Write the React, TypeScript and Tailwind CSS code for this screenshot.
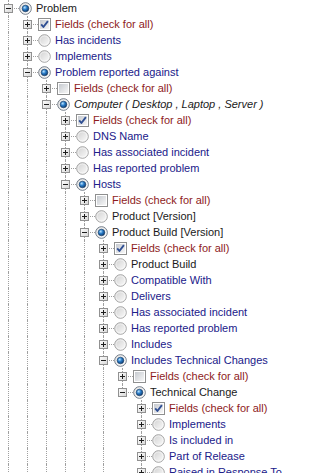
import React from 'react';

type Kind = 'radio' | 'radioOn' | 'check' | 'checkOn';
type Tone = 'entity' | 'rel' | 'fields';

interface Node {
  level: number;
  label: string;
  kind: Kind;
  tone: Tone;
  open?: boolean;
  last?: boolean;
  italic?: boolean;
}

const F = (level: number, checked = false): Node => ({
  level,
  label: 'Fields (check for all)',
  kind: checked ? 'checkOn' : 'check',
  tone: 'fields',
});

const R = (level: number, label: string): Node => ({ level, label, kind: 'radio', tone: 'rel' });

const ROWS: Node[] = [
  { level: 0, label: 'Problem', kind: 'radioOn', tone: 'entity', open: true },
  F(1, true),
  R(1, 'Has incidents'),
  R(1, 'Implements'),
  { level: 1, label: 'Problem reported against', kind: 'radioOn', tone: 'rel', open: true },
  F(2),
  { level: 2, label: 'Computer ( Desktop , Laptop , Server )', kind: 'radioOn', tone: 'entity', open: true, italic: true },
  F(3, true),
  R(3, 'DNS Name'),
  R(3, 'Has associated incident'),
  R(3, 'Has reported problem'),
  { level: 3, label: 'Hosts', kind: 'radioOn', tone: 'rel', open: true },
  F(4),
  { level: 4, label: 'Product [Version]', kind: 'radio', tone: 'entity' },
  { level: 4, label: 'Product Build [Version]', kind: 'radioOn', tone: 'entity', open: true },
  F(5, true),
  { level: 5, label: 'Product Build', kind: 'radio', tone: 'entity' },
  R(5, 'Compatible With'),
  R(5, 'Delivers'),
  R(5, 'Has associated incident'),
  R(5, 'Has reported problem'),
  R(5, 'Includes'),
  { level: 5, label: 'Includes Technical Changes', kind: 'radioOn', tone: 'rel', open: true },
  F(6),
  { level: 6, label: 'Technical Change', kind: 'radioOn', tone: 'entity', open: true, last: true },
  F(7, true),
  R(7, 'Implements'),
  R(7, 'Is included in'),
  R(7, 'Part of Release'),
  R(7, 'Raised in Response To'),
];

const TONE: Record<Tone, string> = {
  entity: 'text-[#1a1a1a]',
  rel: 'text-[#20208a]',
  fields: 'text-[#8e1c1c]',
};

function Defs() {
  return (
    <svg width="0" height="0" className="absolute">
      <defs>
        <linearGradient id="exp" x1="0" y1="0" x2="1" y2="1">
          <stop offset="0" stopColor="#ffffff" />
          <stop offset="1" stopColor="#d6d6d6" />
        </linearGradient>
        <linearGradient id="rad" x1="0" y1="0" x2="1" y2="1">
          <stop offset="0" stopColor="#cfcfcf" />
          <stop offset="1" stopColor="#fdfdfd" />
        </linearGradient>
        <radialGradient id="dot" cx="0.38" cy="0.35" r="0.7">
          <stop offset="0" stopColor="#b9e4ff" />
          <stop offset="0.45" stopColor="#2a7cc8" />
          <stop offset="1" stopColor="#0b3566" />
        </radialGradient>
        <linearGradient id="box" x1="0" y1="0" x2="1" y2="1">
          <stop offset="0" stopColor="#c6cad0" />
          <stop offset="1" stopColor="#f7f7f7" />
        </linearGradient>
      </defs>
    </svg>
  );
}

function Expander({ open }: { open?: boolean }) {
  return (
    <svg width="9" height="9" viewBox="0 0 9 9" shapeRendering="crispEdges" className="col-start-1 row-start-1 ml-[4px] mt-[4px] block self-start">
      <rect x="0.5" y="0.5" width="8" height="8" fill="url(#exp)" stroke="#919191" />
      <rect x="2" y="4" width="5" height="1" fill="#1e1e1e" />
      {!open && <rect x="4" y="2" width="1" height="5" fill="#1e1e1e" />}
    </svg>
  );
}

function StateIcon({ kind }: { kind: Kind }) {
  if (kind === 'radio' || kind === 'radioOn') {
    const on = kind === 'radioOn';
    return (
      <svg width="13" height="13" viewBox="0 0 13 13" className="block">
        <circle cx="6.5" cy="6.5" r="5.8" fill="url(#rad)" stroke={on ? '#6f7985' : '#a3a3a3'} strokeWidth="1" />
        <circle cx="6.5" cy="6.5" r="4.6" fill="none" stroke="#ffffff" strokeOpacity="0.7" strokeWidth="0.8" />
        {on && <circle cx="6.5" cy="6.5" r="3.3" fill="url(#dot)" stroke="#173c66" strokeWidth="0.6" />}
      </svg>
    );
  }
  const on = kind === 'checkOn';
  return (
    <svg width="13" height="13" viewBox="0 0 13 13" className="block">
      <rect x="0.5" y="0.5" width="12" height="12" fill="#ffffff" stroke="#8e8f8f" shapeRendering="crispEdges" />
      <rect x="2" y="2" width="9" height="9" fill="url(#box)" shapeRendering="crispEdges" />
      {on && (
        <path d="M3.2 6.4 L5.4 9 L9.9 3.2" fill="none" stroke="#2f4f93" strokeWidth="1.9" strokeLinejoin="round" />
      )}
    </svg>
  );
}

function TreeRow({ node, guides }: { node: Node; guides: boolean[] }) {
  return (
    <div className="flex h-4 items-start">
      {guides.map((on, k) => (
        <div key={k} className="h-4 w-[19px] shrink-0 pl-[8px]">
          {on && <div className="h-4 border-l border-dotted border-[#a0a0a0]" />}
        </div>
      ))}
      {/* own column: sibling line, branch stub and expander stacked in one grid cell */}
      <div className="grid h-4 w-[19px] shrink-0">
        <div className={`col-start-1 row-start-1 ml-[8px] self-start border-l border-dotted border-[#a0a0a0] ${node.last ? 'h-2' : 'h-4'}`} />
        <div className="col-start-1 row-start-1 ml-[8px] mt-[8px] w-[11px] self-start border-t border-dotted border-[#a0a0a0]" />
        <Expander open={node.open} />
      </div>
      <div className="h-4 w-4 shrink-0 pt-[2px]">
        <StateIcon kind={node.kind} />
      </div>
      <span className={`whitespace-nowrap pl-[1px] text-[11px] leading-4 ${TONE[node.tone]} ${node.italic ? 'italic' : ''}`}>
        {node.label}
      </span>
    </div>
  );
}

export default function App() {
  // which ancestor columns keep a sibling line running
  const stack: boolean[] = [];
  const rows = ROWS.map((node, i) => {
    stack.length = node.level;
    const guides = stack.slice();
    stack[node.level] = !node.last;
    return <TreeRow key={i} node={node} guides={guides} />;
  });

  return (
    <div className="h-[473px] w-[318px] overflow-hidden bg-white font-['Liberation_Sans',Arial,sans-serif]">
      <Defs />
      {rows}
    </div>
  );
}
